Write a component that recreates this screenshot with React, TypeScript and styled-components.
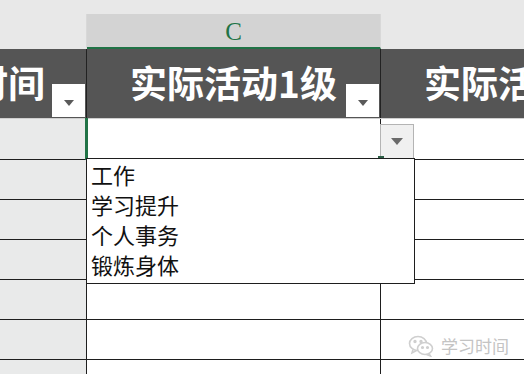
import React from 'react'
import styled, { createGlobalStyle } from 'styled-components'

const GlobalStyle = createGlobalStyle`
  html, body {
    margin: 0;
    padding: 0;
    background: #e8e8e8;
  }
  * {
    box-sizing: border-box;
  }
`

const COLS = '87px 294px 294px'

const Sheet = styled.div`
  position: relative;
  width: 524px;
  height: 374px;
  overflow: hidden;
  padding-top: 14px;
  background: #e8e8e8;
  font-family: "Noto Sans CJK SC", "Noto Sans", sans-serif;
`

const ColHeads = styled.div`
  display: grid;
  grid-template-columns: ${COLS};
  height: 35px;
`

const ColHead = styled.div<{ $selected?: boolean }>`
  display: flex;
  align-items: center;
  justify-content: center;
  border-right: 1px solid #d8d8d8;
  background: ${p => (p.$selected ? '#d3d3d3' : '#e8e8e8')};
  border-bottom: 2px solid ${p => (p.$selected ? '#217346' : 'transparent')};
  color: #217346;
  font-family: "Liberation Serif", serif;
  font-size: 25px;
  padding-top: 2px;
`

const HeadRow = styled.div`
  display: grid;
  grid-template-columns: ${COLS};
  height: 70px;
  background: #555555;
  border-bottom: 1px solid #cfcfcf;
`

const HeadCell = styled.div<{ $align: 'center' | 'end' }>`
  display: grid;
  grid-template-areas: 'cell';
  grid-template-columns: minmax(0, 1fr);
  overflow: hidden;
  border-right: 1px solid #222;
  padding-bottom: 1px;
  > * {
    grid-area: cell;
  }
  > span {
    justify-self: ${p => p.$align};
    align-self: center;
    padding-right: ${p => (p.$align === 'end' ? '41px' : '0')};
    color: #ffffff;
    font-size: 37px;
    font-weight: 700;
    line-height: 1;
    white-space: nowrap;
    padding-bottom: 2px;
  }
`

const FilterBtn = styled.div`
  justify-self: end;
  align-self: end;
  width: 33px;
  height: 33px;
  margin-right: 1px;
  background: #ffffff;
  display: flex;
  align-items: center;
  justify-content: center;
  padding-top: 4px;
`

const Caret = styled.div<{ $w: number; $color: string }>`
  width: 0;
  height: 0;
  border-left: ${p => p.$w / 2}px solid transparent;
  border-right: ${p => p.$w / 2}px solid transparent;
  border-top: ${p => Math.round(p.$w / 2)}px solid ${p => p.$color};
`

const BodyRow = styled.div<{ $h: number }>`
  display: grid;
  grid-template-columns: ${COLS};
  height: ${p => p.$h}px;
`

const Cell = styled.div<{ $gray?: boolean }>`
  border-right: 1px solid #1e1e1e;
  border-bottom: 1px solid #1e1e1e;
  background: ${p => (p.$gray ? '#e9eaea' : '#ffffff')};
`

const ActiveCell = styled(Cell)`
  position: relative;
  z-index: 2;
  border-bottom-color: transparent;
  &::before {
    content: '';
    position: absolute;
    left: -2px;
    top: -1px;
    bottom: -1px;
    width: 3px;
    background: #217346;
  }
`

const FillHandle = styled.div`
  position: absolute;
  right: -4px;
  bottom: -3px;
  width: 6px;
  height: 6px;
  background: #2b5e45;
  z-index: 3;
`

const ListBtn = styled.div`
  position: absolute;
  left: 100%;
  top: 5px;
  width: 34px;
  height: 35px;
  background: #f0f0f0;
  border: 1px solid #b4b4b4;
  display: flex;
  align-items: center;
  justify-content: center;
`

const DropList = styled.ul`
  position: absolute;
  left: -1px;
  top: 39px;
  width: 329px;
  height: 126px;
  margin: 0;
  padding: 0 0 0 4px;
  list-style: none;
  background: #ffffff;
  border: 1px solid #1e1e1e;
  z-index: 4;
`

const DropItem = styled.li`
  font-size: 22px;
  line-height: 30px;
  color: #111111;
`

const Watermark = styled.div`
  position: absolute;
  right: 15px;
  bottom: 16px;
  display: flex;
  align-items: center;
  gap: 7px;
  color: #c4c4c4;
  font-size: 17px;
  z-index: 5;
`

const WechatIcon = () => (
  <svg width="26" height="22" viewBox="0 0 26 22" fill="none" stroke="#cfcfcf" strokeWidth="1.6">
    <ellipse cx="10" cy="8.5" rx="8.5" ry="7" />
    <path d="M5 14.5 L4 18 L8.5 15.6" />
    <ellipse cx="17" cy="13.5" rx="7.5" ry="6" fill="#ffffff" />
    <path d="M21 18.6 L22.5 21 L18.5 19.4" />
    <circle cx="7" cy="6.5" r="0.9" fill="#cfcfcf" />
    <circle cx="13" cy="6.5" r="0.9" fill="#cfcfcf" />
    <circle cx="14.5" cy="12.5" r="0.8" fill="#cfcfcf" />
    <circle cx="19.5" cy="12.5" r="0.8" fill="#cfcfcf" />
  </svg>
)

const options = ['工作', '学习提升', '个人事务', '锻炼身体']

const App: React.FC = () => {
  const rows = [0, 1, 2, 3, 4, 5, 6]
  return (
    <>
      <GlobalStyle />
      <Sheet>
        <ColHeads>
          <ColHead />
          <ColHead $selected>C</ColHead>
          <ColHead />
        </ColHeads>
        <HeadRow>
          <HeadCell $align="end">
            <span>时间</span>
            <FilterBtn><Caret $w={11} $color="#5a5a5a" /></FilterBtn>
          </HeadCell>
          <HeadCell $align="center">
            <span>实际活动1级</span>
            <FilterBtn><Caret $w={11} $color="#5a5a5a" /></FilterBtn>
          </HeadCell>
          <HeadCell $align="center">
            <span>实际活动2级</span>
            <FilterBtn><Caret $w={11} $color="#5a5a5a" /></FilterBtn>
          </HeadCell>
        </HeadRow>
        {rows.map(i => (
          <BodyRow key={i} $h={i === 0 ? 41 : 40}>
            <Cell $gray />
            {i === 0 ? (
              <ActiveCell>
                <FillHandle />
                <ListBtn><Caret $w={13} $color="#6a6a6a" /></ListBtn>
                <DropList>
                  {options.map(o => (
                    <DropItem key={o}>{o}</DropItem>
                  ))}
                </DropList>
              </ActiveCell>
            ) : (
              <Cell />
            )}
            <Cell />
          </BodyRow>
        ))}
        <Watermark>
          <WechatIcon />
          <span>学习时间</span>
        </Watermark>
      </Sheet>
    </>
  )
}

export default App
